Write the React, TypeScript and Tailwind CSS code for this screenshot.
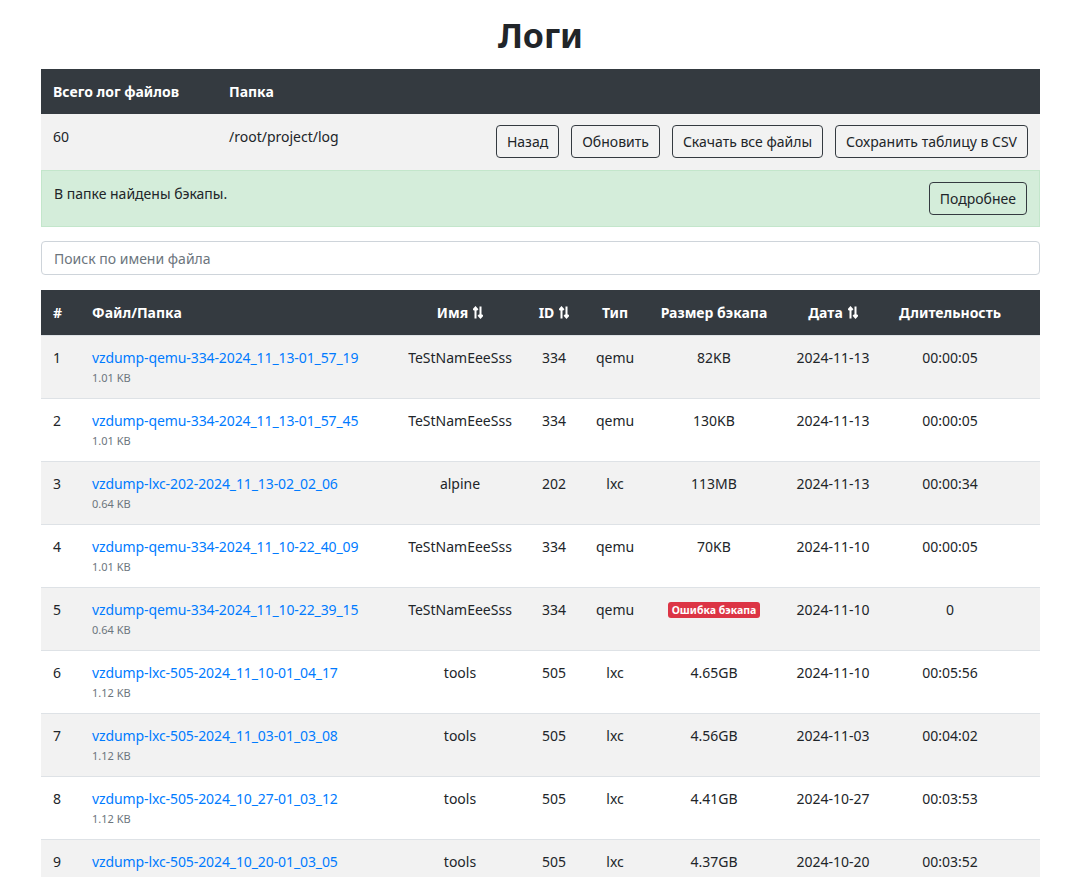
import React from "react";

type Row = {
  n: number;
  file: string;
  size: string;
  name: string;
  id: string;
  type: string;
  backup: string | null;
  date: string;
  duration: string;
};

const rows: Row[] = [
  { n: 1, file: "vzdump-qemu-334-2024_11_13-01_57_19", size: "1.01 KB", name: "TeStNamEeeSss", id: "334", type: "qemu", backup: "82KB", date: "2024-11-13", duration: "00:00:05" },
  { n: 2, file: "vzdump-qemu-334-2024_11_13-01_57_45", size: "1.01 KB", name: "TeStNamEeeSss", id: "334", type: "qemu", backup: "130KB", date: "2024-11-13", duration: "00:00:05" },
  { n: 3, file: "vzdump-lxc-202-2024_11_13-02_02_06", size: "0.64 KB", name: "alpine", id: "202", type: "lxc", backup: "113MB", date: "2024-11-13", duration: "00:00:34" },
  { n: 4, file: "vzdump-qemu-334-2024_11_10-22_40_09", size: "1.01 KB", name: "TeStNamEeeSss", id: "334", type: "qemu", backup: "70KB", date: "2024-11-10", duration: "00:00:05" },
  { n: 5, file: "vzdump-qemu-334-2024_11_10-22_39_15", size: "0.64 KB", name: "TeStNamEeeSss", id: "334", type: "qemu", backup: null, date: "2024-11-10", duration: "0" },
  { n: 6, file: "vzdump-lxc-505-2024_11_10-01_04_17", size: "1.12 KB", name: "tools", id: "505", type: "lxc", backup: "4.65GB", date: "2024-11-10", duration: "00:05:56" },
  { n: 7, file: "vzdump-lxc-505-2024_11_03-01_03_08", size: "1.12 KB", name: "tools", id: "505", type: "lxc", backup: "4.56GB", date: "2024-11-03", duration: "00:04:02" },
  { n: 8, file: "vzdump-lxc-505-2024_10_27-01_03_12", size: "1.12 KB", name: "tools", id: "505", type: "lxc", backup: "4.41GB", date: "2024-10-27", duration: "00:03:53" },
  { n: 9, file: "vzdump-lxc-505-2024_10_20-01_03_05", size: "1.12 KB", name: "tools", id: "505", type: "lxc", backup: "4.37GB", date: "2024-10-20", duration: "00:03:52" },
  { n: 10, file: "vzdump-lxc-505-2024_10_13-01_03_11", size: "1.12 KB", name: "tools", id: "505", type: "lxc", backup: "4.35GB", date: "2024-10-13", duration: "00:03:50" },
];

// ⇅ sort glyph
const SortIcon = () => (
  <svg
    width="10"
    height="13"
    viewBox="0 0 10 13"
    fill="none"
    stroke="currentColor"
    strokeWidth="2"
    className="inline-block ml-[5px] align-[-1px]"
  >
    <path d="M2.5 12.5V1.5M0.3 4L2.5 1.5L4.7 4" />
    <path d="M7.5 0.5v11M5.3 9L7.5 11.5L9.7 9" />
  </svg>
);

const btn =
  "border border-[#343a40] rounded-[4px] px-[10px] py-[5px] text-[14px] leading-[21px] text-[#212529] bg-transparent";

export default function App() {
  return (
    <div className="min-h-screen bg-white text-[#212529] text-[14px] leading-[21px] font-['Segoe_UI','Noto_Sans',sans-serif]">
      <div className="ml-[41px] w-[999px]">
        <h1 className="pt-[12px] mb-[11px] text-center text-[34px] leading-[46px] font-bold">Логи</h1>

        {/* summary */}
        <table className="w-full border-collapse">
          <thead>
            <tr className="bg-[#343a40] text-white">
              <th className="w-[176px] h-[45px] px-3 text-left font-bold">Всего лог файлов</th>
              <th className="w-[250px] px-3 text-left font-bold">Папка</th>
              <th className="px-3"></th>
            </tr>
          </thead>
          <tbody>
            <tr className="bg-[#f2f2f2]">
              <td className="px-3 pt-[12px] align-top">60</td>
              <td className="px-3 pt-[12px] align-top">/root/project/log</td>
              <td className="px-3 pt-[11px] pb-[12px]">
                <div className="flex justify-end gap-[12px]">
                  <button className={btn}>Назад</button>
                  <button className={btn}>Обновить</button>
                  <button className={btn}>Скачать все файлы</button>
                  <button className={btn}>Сохранить таблицу в CSV</button>
                </div>
              </td>
            </tr>
          </tbody>
        </table>

        {/* alert */}
        <div className="flex items-start justify-between bg-[#d4edda] border border-[#c3e6cb] px-3 py-[11px]">
          <span className="pt-[1px]">В папке найдены бэкапы.</span>
          <button className={btn}>Подробнее</button>
        </div>

        <input
          className="mt-[14px] w-full h-[34px] border border-[#ced4da] rounded-[4px] px-3 text-[14px] placeholder:text-[#6c757d] outline-none"
          placeholder="Поиск по имени файла"
        />

        {/* logs table */}
        <table className="mt-[15px] w-full border-collapse table-fixed">
          <colgroup>
            <col className="w-[39px]" />
            <col className="w-[318px]" />
            <col className="w-[124px]" />
            <col className="w-[64px]" />
            <col className="w-[58px]" />
            <col className="w-[140px]" />
            <col className="w-[98px]" />
            <col className="w-[136px]" />
            <col className="w-[22px]" />
          </colgroup>
          <thead>
            <tr className="bg-[#343a40] text-white h-[45px]">
              <th className="px-3 text-left font-bold">#</th>
              <th className="px-3 text-left font-bold">Файл/Папка</th>
              <th className="text-center font-bold whitespace-nowrap">Имя<SortIcon /></th>
              <th className="text-center font-bold whitespace-nowrap">ID<SortIcon /></th>
              <th className="text-center font-bold">Тип</th>
              <th className="text-center font-bold whitespace-nowrap">Размер бэкапа</th>
              <th className="text-center font-bold whitespace-nowrap">Дата<SortIcon /></th>
              <th className="text-center font-bold">Длительность</th>
              <th></th>
            </tr>
          </thead>
          <tbody>
            {rows.map((r) => (
              <tr
                key={r.n}
                className={`border-t border-[#dee2e6] ${r.n % 2 === 1 ? "bg-[#f2f2f2]" : "bg-white"}`}
              >
                <td className="px-3 pt-[11px] pb-3 align-top">{r.n}</td>
                <td className="px-3 pt-[11px] pb-3 align-top">
                  <a href="#" className="text-[#007bff] block whitespace-nowrap tracking-[-0.1px]">{r.file}</a>
                  <div className="mt-[2px] text-[11px] leading-[16px] text-[#6c757d]">{r.size}</div>
                </td>
                <td className="pt-[11px] align-top text-center whitespace-nowrap">{r.name}</td>
                <td className="pt-[11px] align-top text-center">{r.id}</td>
                <td className="pt-[11px] align-top text-center">{r.type}</td>
                <td className="pt-[11px] align-top text-center">
                  {r.backup ?? (
                    <span className="inline-block bg-[#dc3545] text-white text-[10.5px] leading-[12px] font-bold px-[4px] py-[2px] rounded-[3px] align-[1px]">
                      Ошибка бэкапа
                    </span>
                  )}
                </td>
                <td className="pt-[11px] align-top text-center">{r.date}</td>
                <td className="pt-[11px] align-top text-center">{r.duration}</td>
                <td></td>
              </tr>
            ))}
          </tbody>
        </table>
      </div>
    </div>
  );
}
